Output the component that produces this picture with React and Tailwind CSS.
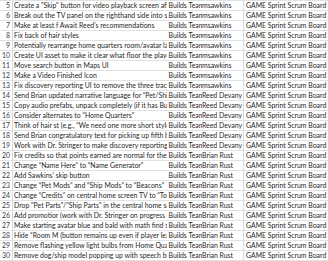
import React from "react";

const rows = [
  [5, "Create a \"Skip\" button for video playback screen after the video ends", "msawkins"],
  [6, "Break out the TV panel on the righthand side into separate panels", "msawkins"],
  [7, "Make at least f Await Reed's recommendations", "msawkins"],
  [8, "Fix back of hair styles", "msawkins"],
  [9, "Potentially rearrange home quarters room/avatar layout", "msawkins"],
  [10, "Create UI asset to make it clear what floor the player is on", "msawkins"],
  [11, "Move search button in Maps UI", "msawkins"],
  [12, "Make a Video Finished Icon", "msawkins"],
  [13, "Fix discovery reporting UI to remove the three tracking dots", "msawkins"],
  [14, "Send Brian updated narrative language for \u201cPet/Ship Mods\u201d", "Reed Devany"],
  [15, "Copy audio prefabs, unpack completely (if it has Builds)", "Reed Devany"],
  [16, "Consider alternates to \u201cHome Quarters\u201d", "Reed Devany"],
  [17, "Think of hair st (e.g., \u201cWe need one more short style\u201d)", "Reed Devany"],
  [18, "Send Brian congratulatory text for picking up fifth badge", "Reed Devany"],
  [19, "Work with Dr. Stringer to make discovery reporting clearer", "Reed Devany"],
  [20, "Fix credits so that points earned are normal for the level", "Brian Rust"],
  [21, "Change \u201cName Here\u201d to \u201cName Generator\u201d", "Brian Rust"],
  [22, "Add Sawkins' skip button", "Brian Rust"],
  [23, "Change \u201cPet Mods\u201d and \u201cShip Mods\u201d to \u201cBeacons\u201d", "Brian Rust"],
  [24, "Change \u201cCredits\u201d on central home screen TV to \u201cTokens\u201d", "Brian Rust"],
  [25, "Drop \"Pet Parts\"/\"Ship Parts\" in the central home screen", "Brian Rust"],
  [26, "Add promotior (work with Dr. Stringer on progress bar)", "Brian Rust"],
  [27, "Make starting avatar blue and bald with math find stats", "Brian Rust"],
  [28, "Hide \u201cRoom M  (button remains up even if player leaves)", "Brian Rust"],
  [29, "Remove flashing yellow light bulbs from Home Quarters", "Brian Rust"],
  [30, "Remove dog/ship model popping up with speech bubble", "Brian Rust"],
];

export default function App() {
  return (
    <div className="w-[328px] h-[261px] overflow-hidden bg-white text-[#1f1f1f] text-[6.9px] leading-[9px] font-['Lato',sans-serif]">
      {rows.map(([n, task, owner]) => (
        <div key={n} className="flex h-[10px] border-t border-[#e1e1e1]">
          <div className="w-[13px] shrink-0 pr-[2px] text-right text-[#3a3a3a] border-r border-[#dadada] overflow-hidden">{n}</div>
          <div className="w-[154px] shrink-0 pl-[1px] overflow-hidden whitespace-nowrap">{task}</div>
          <div className="w-[35px] shrink-0 pl-[1.5px] overflow-hidden whitespace-nowrap">Builds Team</div>
          <div className="w-[42px] shrink-0 overflow-hidden whitespace-nowrap border-r border-[#dadada]">{owner}</div>
          <div className="flex-1 pl-[2px] overflow-hidden whitespace-nowrap">GAME Sprint Scrum Board</div>
        </div>
      ))}
      <div className="h-[1px] border-t border-[#e1e1e1]" />
    </div>
  );
}
